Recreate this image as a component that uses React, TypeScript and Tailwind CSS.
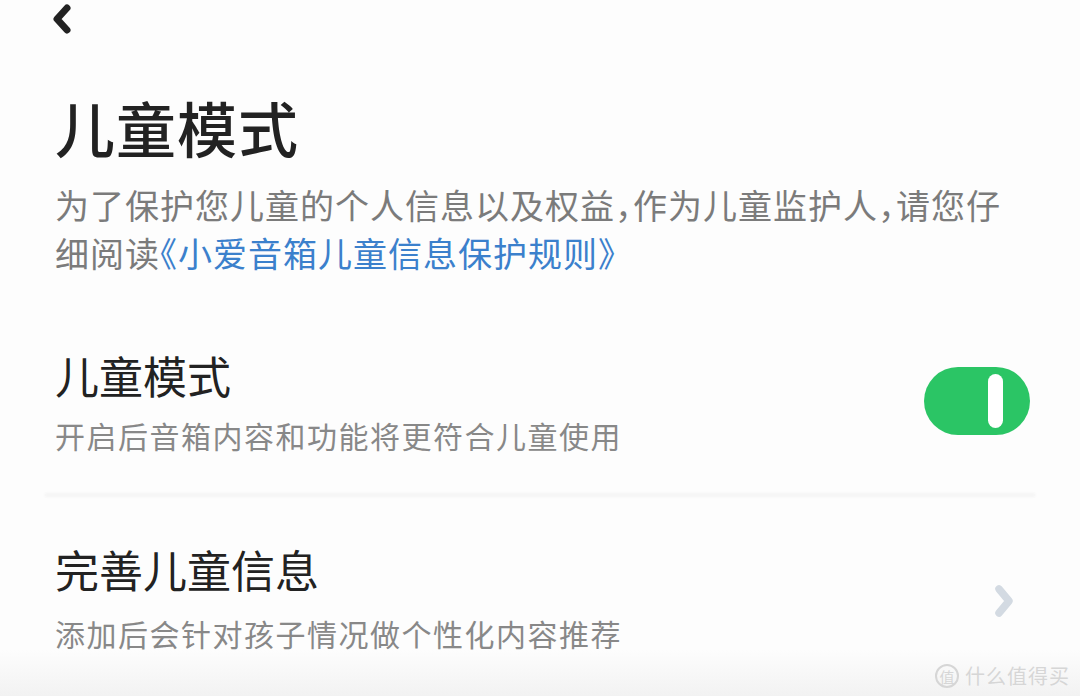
import { useState } from 'react';

const FONT = { fontFamily: '"Noto Sans CJK SC", "Noto Sans", sans-serif' };

function BackIcon() {
  return (
    <svg width="28" height="40" viewBox="0 0 28 40" fill="none">
      <path
        d="M19 8 L9 19 L19 30"
        stroke="#222"
        strokeWidth="7"
        strokeLinecap="round"
        strokeLinejoin="round"
      />
    </svg>
  );
}

function ChevronRight() {
  return (
    <svg width="28" height="40" viewBox="0 0 28 40" fill="none" className="mt-[12px]">
      <path
        d="M9 6 L19 18 L9 30"
        stroke="#d3dae2"
        strokeWidth="7.5"
        strokeLinecap="round"
        strokeLinejoin="round"
      />
    </svg>
  );
}

function Toggle({ on, onClick }: { on: boolean; onClick: () => void }) {
  return (
    <button
      onClick={onClick}
      className={`flex items-center w-[106px] h-[68px] rounded-full px-[7px] ${
        on ? 'bg-[#2bc565] justify-end' : 'bg-[#e2e2e2] justify-start'
      }`}
    >
      <span className="block w-[15px] h-[54px] rounded-full bg-white mr-[20px]" />
    </button>
  );
}

export default function App() {
  const [kidMode, setKidMode] = useState(true);

  return (
    <div
      style={FONT}
      className="relative w-[1080px] h-[696px] overflow-hidden bg-[linear-gradient(to_bottom,#fdfdfd_650px,#f2f2f2_696px)]"
    >
      {/* 顶部返回 */}
      <div className="h-[40px] pl-[48px] flex items-start">
        <BackIcon />
      </div>

      <div className="pl-[55px] pr-[50px]">
        {/* 标题和说明 */}
        <h1 className="mt-[51px] text-[60px] leading-[72px] font-medium text-[#222] tracking-[1px]">
          儿童模式
        </h1>
        <p className="mt-[18px] text-[34px] leading-[48px] text-[#7b7b7b] tracking-[1px] [font-feature-settings:'halt']">
          为了保护您儿童的个人信息以及权益，作为儿童监护人，请您仔细阅读
          <span className="text-[#3b80cc]">《小爱音箱儿童信息保护规则》</span>
        </p>

        {/* 儿童模式开关 */}
        <div className="mt-[70px] flex items-center justify-between">
          <div>
            <div className="text-[44px] leading-[56px] text-[#222]">儿童模式</div>
            <div className="mt-[12px] text-[30px] leading-[40px] text-[#888] tracking-[1.5px]">
              开启后音箱内容和功能将更符合儿童使用
            </div>
          </div>
          <Toggle on={kidMode} onClick={() => setKidMode(!kidMode)} />
        </div>
      </div>

      <div className="mt-[38px] mx-[45px] h-[4px] bg-[#f5f5f5] blur-[1px]" />

      {/* 完善儿童信息 */}
      <div className="pl-[55px] pr-[62px] mt-[44px] flex items-center justify-between">
        <div>
          <div className="text-[44px] leading-[56px] text-[#222]">完善儿童信息</div>
          <div className="mt-[16px] text-[30px] leading-[40px] text-[#888] tracking-[1.5px]">
            添加后会针对孩子情况做个性化内容推荐
          </div>
        </div>
        <ChevronRight />
      </div>

      {/* 水印 */}
      <div className="absolute right-[10px] bottom-[8px] flex items-center gap-[6px] text-[#d6d6d6]">
        <span className="flex items-center justify-center w-[24px] h-[24px] rounded-full border-2 border-[#d6d6d6] text-[15px] leading-none">
          值
        </span>
        <span className="text-[20px] leading-[24px] tracking-[1px]">什么值得买</span>
      </div>
    </div>
  );
}
